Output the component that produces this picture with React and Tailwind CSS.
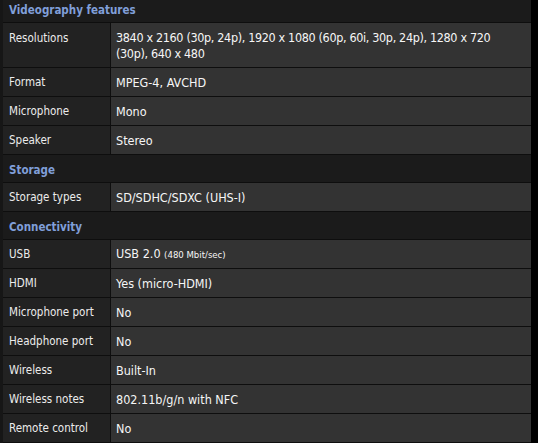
const SECTIONS = [
  {
    title: 'Videography features',
    rows: [
      ['Resolutions', '3840 x 2160 (30p, 24p), 1920 x 1080 (60p, 60i, 30p, 24p), 1280 x 720 (30p), 640 x 480'],
      ['Format', 'MPEG-4, AVCHD'],
      ['Microphone', 'Mono'],
      ['Speaker', 'Stereo'],
    ],
  },
  {
    title: 'Storage',
    rows: [['Storage types', 'SD/SDHC/SDXC (UHS-I)']],
  },
  {
    title: 'Connectivity',
    rows: [
      ['USB', <>USB 2.0 <span className="text-[9.5px]">(480 Mbit/sec)</span></>],
      ['HDMI', 'Yes (micro-HDMI)'],
      ['Microphone port', 'No'],
      ['Headphone port', 'No'],
      ['Wireless', 'Built-In'],
      ['Wireless notes', '802.11b/g/n with NFC'],
      ['Remote control', 'No'],
    ],
  },
]

function Row({ label, value, tall }) {
  return (
    <div className={`flex border-b border-[#0e0e0e] ${tall ? 'h-[45px]' : 'h-[29px]'}`}>
      <div className={`flex w-[108px] shrink-0 border-r border-[#0e0e0e] bg-[#222222] pl-[6px] text-[11.5px] leading-[15px] text-[#ececec] ${tall ? 'pt-[8px]' : 'items-center pt-[1px]'}`}>
        {label}
      </div>
      <div className={`flex flex-1 bg-[#333333] pl-[5px] pr-[20px] text-[12.5px] leading-[16px] text-[#f6f6f6] ${tall ? 'pt-[7px] tracking-[-0.35px]' : 'items-center pt-[1px]'}`}>
        <div>{value}</div>
      </div>
    </div>
  )
}

export default function App() {
  return (
    <div className="h-[443px] w-[538px] overflow-hidden bg-black font-['DejaVu_Sans_Condensed','DejaVu_Sans',sans-serif]">
      <div className="w-[531px] border-l-[3px] border-[#161616]">
        {SECTIONS.map((s, i) => (
          <div key={s.title}>
            <div className={`flex items-center border-b border-[#0e0e0e] bg-[#1b1b1b] pl-[6px] text-[11.5px] font-bold text-[#809fd9] ${i === 0 ? 'h-[23px]' : 'h-[28px] pt-[4px]'}`}>
              {s.title}
            </div>
            {s.rows.map(([l, v]) => (
              <Row key={l} label={l} value={v} tall={l === 'Resolutions'} />
            ))}
          </div>
        ))}
      </div>
    </div>
  )
}
